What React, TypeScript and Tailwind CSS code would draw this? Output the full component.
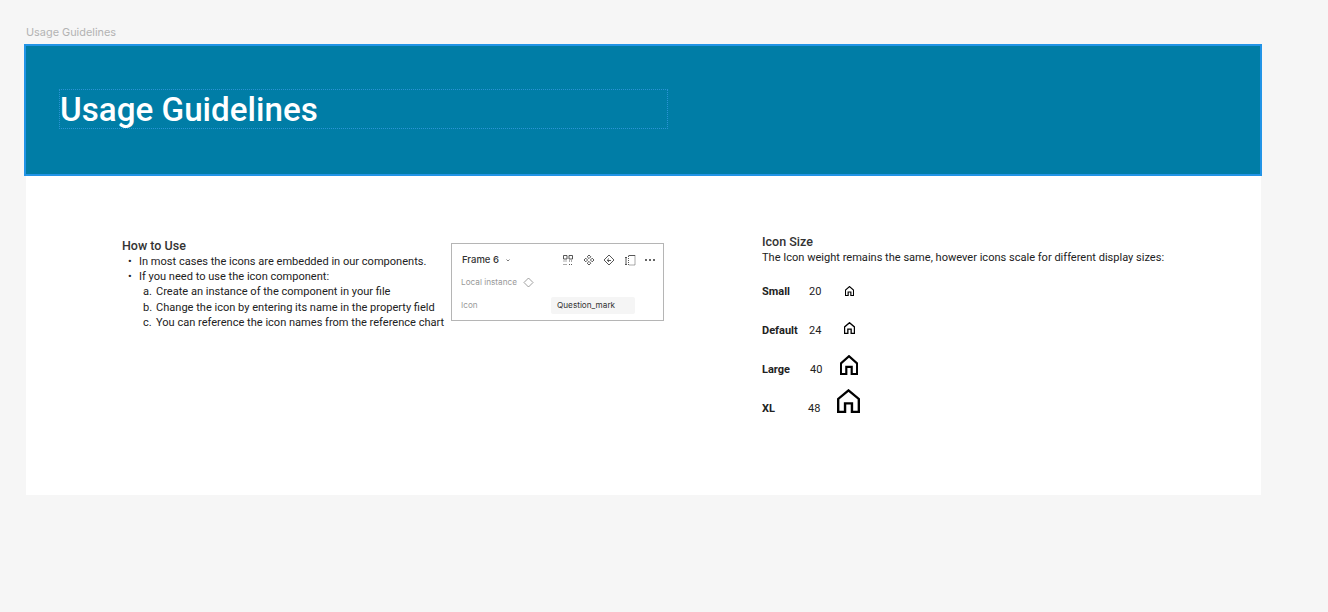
import React from 'react';

const HomeIcon = ({ w, h, weight }: { w: number; h: number; weight: number }) => (
  <svg width={w} height={h} viewBox="2 0.7 20 22.3" preserveAspectRatio="none" fill="none" stroke="#000" strokeWidth={weight}>
    <path d="M3 22V10L12 2l9 8v12h-6v-8H9v8H3Z" />
  </svg>
);

const sizes = [
  { label: 'Small', value: '20', w: 9, h: 10, weight: 2.6, valuePad: 'pl-[0px]', lift: 'mb-[4px]' },
  { label: 'Default', value: '24', w: 11, h: 12, weight: 2.4, valuePad: 'pl-[0px]', lift: 'mb-[8px]' },
  { label: 'Large', value: '40', w: 18, h: 20, weight: 2.4, valuePad: 'pl-[1px]', lift: 'mb-[12px]' },
  { label: 'XL', value: '48', w: 23, h: 24, weight: 2.1, valuePad: 'ml-[-1px]', lift: 'mb-[17px]' },
];

const FramePanel = () => (
  <div className="w-[213px] h-[78px] border border-[#b5b5b5] bg-white pl-[10px] pr-[10px] pt-[8px] text-[8.200px] text-[#999999] font-['Inter',sans-serif]">
    <div className="flex items-center justify-between h-[16px]">
      <div className="flex items-center gap-[6px] text-[9.500px] font-medium text-[#333]">
        Frame 6
        <svg width="6" height="6" viewBox="0 0 6 6" fill="none" stroke="#555" strokeWidth="0.8"><path d="M1.500 2.500 3 4l1.500-1.500" /></svg>
      </div>
      <div className="flex items-center gap-[8.500px] mr-[-3px]">
        <svg width="12" height="12" viewBox="0 0 12 12" fill="none" stroke="#444" strokeWidth="0.9">
          <path d="M1.500 1.500h3.500v3.500h-3.500zM7 1.500h3.500v3.500H7z" />
          <path strokeDasharray="1 1" d="M1.500 7h3.500M1.500 10.500h3.500M7 7h3.500M7 10.500h3.500" />
        </svg>
        <svg width="12" height="12" viewBox="0 0 12 12" fill="none" stroke="#444" strokeWidth="0.9">
          <path d="M6 1 7.800 2.800 6 4.600 4.200 2.800zM6 7.400l1.800 1.800L6 11 4.200 9.200zM2.800 4.200 4.600 6 2.800 7.800 1 6zM9.200 4.200 11 6 9.200 7.800 7.400 6z" />
        </svg>
        <svg width="12" height="12" viewBox="0 0 12 12" fill="none" stroke="#444" strokeWidth="0.9">
          <path d="M6 1 11 6 6 11 1 6z" />
          <path d="M8 6.500H4.500M6 4.500 4.200 6.300 6 8" />
        </svg>
        <svg width="12" height="12" viewBox="0 0 12 12" fill="none" stroke="#444" strokeWidth="0.9">
          <path d="M4.500 1.500H11" />
          <path d="M11 1.500V11H4.500V1.500" strokeDasharray="1 1" />
          <path d="M1 3.500h2M2 3.500v7M1 10.500h2" />
        </svg>
        <svg width="12" height="12" viewBox="0 0 12 12" fill="#333">
          <circle cx="2" cy="6" r="1" /><circle cx="6" cy="6" r="1" /><circle cx="10" cy="6" r="1" />
        </svg>
      </div>
    </div>
    <div className="flex items-center gap-[6px] mt-[6px] ml-[-1px] h-[16px]">
      Local instance
      <svg width="11" height="11" viewBox="0 0 11 11" fill="none" stroke="#777" strokeWidth="0.7"><path d="M5.500 1 10 5.500 5.500 10 1 5.500z" /></svg>
    </div>
    <div className="flex items-center mt-[7px] ml-[-1px] h-[17px]">
      <span className="w-[90px]">Icon</span>
      <span className="w-[84px] h-[17px] flex items-center pl-[6px] rounded-[2px] bg-[#f5f5f5] text-[#333]">Question_mark</span>
    </div>
  </div>
);

export default function App() {
  return (
    <div className="min-h-[612px] bg-[#f6f6f6] pt-[23px] pl-[24px] font-['Roboto',sans-serif]">
      <div className="pl-[2px] h-[18px] mb-[3px] flex items-center text-[10.900px] text-[#b3b3b3] font-['Inter',sans-serif]">Usage Guidelines</div>
      <div className="w-[1238px]">
        <div className="h-[132px] bg-[#007da6] border-2 border-[#2294e6] pl-[33px] pt-[43px]">
          <div className="w-[609px] h-[40px] pt-[2px] flex items-center border border-dotted border-[#2a94d6] text-[33.200px] font-medium text-white">
            Usage Guidelines
          </div>
        </div>
        <div className="mx-[2px] w-[1235px] h-[319px] bg-white flex pt-[67px] text-[#222]">
          <div className="w-[329px] ml-[96px] mt-[-5px]">
            <div className="text-[12.500px] leading-[16px] font-medium text-[#333]">How to Use</div>
            <ul className="text-[11.050px] leading-[15.200px]">
              <li className="flex pl-[6px]"><span className="w-[11px]">•</span>In most cases the icons are embedded in our components.</li>
              <li className="flex pl-[6px]"><span className="w-[11px]">•</span>If you need to use the icon component:</li>
              <li className="flex pl-[21px]"><span className="w-[13px]">a.</span>Create an instance of the component in your file</li>
              <li className="flex pl-[21px]"><span className="w-[13px]">b.</span>Change the icon by entering its name in the property field</li>
              <li className="flex pl-[21px]"><span className="w-[13px]">c.</span>You can reference the icon names from the reference chart</li>
            </ul>
          </div>
          <FramePanel />
          <div className="ml-[98px] mt-[-10px]">
            <div className="text-[12.500px] leading-[17px] font-medium text-[#333]">Icon Size</div>
            <div className="text-[11.050px] leading-[15px] whitespace-nowrap">The Icon weight remains the same, however icons scale for different display sizes:</div>
            <div className="mt-[8px]">
              {sizes.map((s) => (
                <div key={s.label} className="flex items-center h-[39px] text-[11px]">
                  <span className="w-[47px] font-bold">{s.label}</span>
                  <span className={`w-[20px] ${s.valuePad}`}>{s.value}</span>
                  <span className={`w-[40px] flex justify-center ${s.lift}`}>
                    <HomeIcon w={s.w} h={s.h} weight={s.weight} />
                  </span>
                </div>
              ))}
            </div>
          </div>
        </div>
      </div>
    </div>
  );
}
